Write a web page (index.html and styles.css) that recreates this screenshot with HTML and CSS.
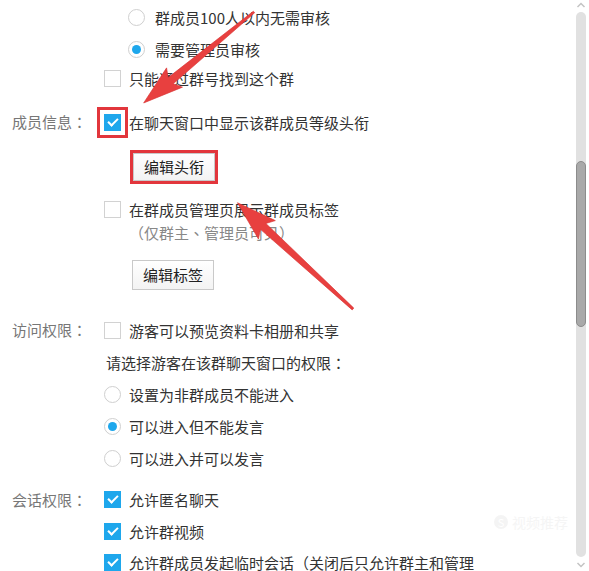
FILE: index.html
```html
<!DOCTYPE html>
<html>

<head lang="zh">
    <meta charset="UTF-8">
    <title>群设置</title>
    <link rel="stylesheet" href="styles.css">
</head>

<body>
    <div class="window">
        <div class="panel">
            <div class="group group-top">
                <div class="options">
                    <div class="row sub"><span class="radio"></span>群成员100人以内无需审核</div>
                    <div class="row sub"><span class="radio on"></span>需要管理员审核</div>
                    <div class="row short"><span class="check"></span>只能通过群号找到这个群</div>
                </div>
            </div>

            <div class="group group-member">
                <div class="label">成员信息<span class="colon">：</span></div>
                <div class="options">
                    <div class="row"><span class="check on marked"></span>在聊天窗口中显示该群成员等级头衔</div>
                    <div class="btn-row"><a href="javascript:void(0);" class="btn marked">编辑头衔</a></div>
                    <div class="row row-tag"><span class="check"></span>在群成员管理页展示群成员标签</div>
                    <div class="note"><span class="colon">（</span>仅群主<span class="colon">、</span>管理员可见<span class="colon">）</span></div>
                    <div class="btn-row btn-row-tag"><a href="javascript:void(0);" class="btn btn-tag">编辑标签</a></div>
                </div>
            </div>

            <div class="group group-visit">
                <div class="label">访问权限<span class="colon">：</span></div>
                <div class="options">
                    <div class="row"><span class="check"></span>游客可以预览资料卡相册和共享</div>
                    <div class="row tip">请选择游客在该群聊天窗口的权限<span class="colon">：</span></div>
                    <div class="row"><span class="radio"></span>设置为非群成员不能进入</div>
                    <div class="row"><span class="radio on"></span>可以进入但不能发言</div>
                    <div class="row"><span class="radio"></span>可以进入并可以发言</div>
                </div>
            </div>

            <div class="group group-talk">
                <div class="label">会话权限<span class="colon">：</span></div>
                <div class="options">
                    <div class="row row-a"><span class="check on"></span>允许匿名聊天</div>
                    <div class="row"><span class="check on"></span>允许群视频</div>
                    <div class="row row-a"><span class="check on"></span>允许群成员发起临时会话<span class="colon">（</span>关闭后只允许群主和管理</div>
                </div>
            </div>
        </div>

        <div class="scrollbar">
            <svg class="scroll-arrow" width="10" height="12" viewBox="0 0 10 12">
                <polyline points="1.5,7 5,3.5 8.5,7" fill="none" stroke="#c4c4c4" stroke-width="1.5" />
            </svg>
            <div class="track">
                <div class="thumb"></div>
            </div>
            <svg class="scroll-arrow" width="10" height="12" viewBox="0 0 10 12">
                <polyline points="1.5,4 5,7.5 8.5,4" fill="none" stroke="#c4c4c4" stroke-width="1.5" />
            </svg>
        </div>

        <div class="watermark"><span class="wm-logo">S</span>视频推荐</div>

        <!-- 标注箭头 -->
        <svg class="arrows" width="589" height="571" viewBox="0 0 589 571">
            <g transform="translate(254 12) rotate(140.5)">
                <polygon points="0,-1 108,-4 103,-12.5 143,0 103,12.5 108,4 0,1" />
            </g>
            <g transform="translate(353 309) rotate(-137.4)">
                <polygon points="0,-1.2 122,-4 117,-12.5 157,0 117,12.5 122,4 0,1.2" />
            </g>
        </svg>
    </div>
</body>

</html>
```

FILE: styles.css
```css
html,
body,
div,
span,
a {
    padding: 0px;
    margin: 0px;
}

body {
    background: #ffffff;
    font-family: "Noto Sans CJK SC", "Noto Sans", sans-serif;
    font-size: 15px;
    color: #333333;
}

a {
    text-decoration: none;
    color: #333333;
}

.window {
    position: relative;
    width: 589px;
    height: 571px;
    overflow: hidden;
    display: flex;
}

.panel {
    flex: 1;
    padding-top: 1px;
}

.group {
    display: flex;
}

.group-top {
    padding-left: 104px;
}

.group-member {
    margin-top: 15px;
}

.group-visit {
    margin-top: 24px;
}

.group-talk {
    margin-top: 10px;
}

.label {
    width: 92px;
    flex-shrink: 0;
    padding-left: 12px;
    height: 32px;
    line-height: 32px;
    color: #777777;
    white-space: nowrap;
}

/* 全角标点居中 */
.colon {
    font-family: "Noto Sans CJK TC", "Noto Sans CJK SC", sans-serif;
}

.group-talk .label {
    height: 31px;
    line-height: 31px;
}

.options {
    flex: 1;
}

.row {
    display: flex;
    align-items: center;
    height: 32px;
    white-space: nowrap;
}

.row.short {
    height: 26px;
}

.row.row-a {
    height: 31px;
}

.row.sub {
    padding-left: 24px;
}

.row.sub .radio {
    margin-right: 10px;
}

.row.tip {
    padding-left: 2px;
}

.row-tag {
    margin-top: 12px;
}

.check {
    width: 15px;
    height: 15px;
    border: 1px solid #d2d2d2;
    background: #ffffff;
    margin-right: 8px;
    flex-shrink: 0;
    position: relative;
}

.check.on {
    background: #1ea7ec;
    border-color: #1ea7ec;
}

.check.on::after {
    content: "";
    position: absolute;
    left: 3px;
    top: 2px;
    width: 8px;
    height: 4px;
    border-left: 2px solid #ffffff;
    border-bottom: 2px solid #ffffff;
    transform: rotate(-45deg);
    transform-origin: center;
    margin-top: 1px;
}

.radio {
    width: 15px;
    height: 15px;
    border: 1px solid #cfcfcf;
    border-radius: 50%;
    background: #ffffff;
    margin-right: 8px;
    flex-shrink: 0;
    display: flex;
    align-items: center;
    justify-content: center;
}

.radio.on::after {
    content: "";
    width: 9px;
    height: 9px;
    border-radius: 50%;
    background: #1ea7ec;
}

.marked {
    outline: 3px solid #e2363c;
}

.check.marked {
    outline-offset: 4px;
}

.btn-row {
    margin-top: 15px;
    padding-left: 29px;
}

.btn {
    display: block;
    width: 80px;
    height: 26px;
    line-height: 26px;
    text-align: center;
    border: 1px solid #c9c9c9;
    background: linear-gradient(#ffffff, #f3f3f3);
    color: #222222;
}

.btn-row-tag {
    margin-top: 19px;
    padding-left: 28px;
}

.btn.btn-tag {
    height: 28px;
    line-height: 28px;
}

.note {
    height: 16px;
    line-height: 16px;
    color: #888888;
    padding-left: 25px;
    white-space: nowrap;
}

.scrollbar {
    width: 13px;
    display: flex;
    flex-direction: column;
}

.scroll-arrow {
    display: block;
    flex-shrink: 0;
}

.track {
    flex: 1;
    width: 10px;
    margin: 0px 0px 2px 0px;
    background: #e1e1e1;
    border-radius: 5px;
}

.thumb {
    margin-top: 149px;
    height: 166px;
    background: #a9a9a9;
    border: 1px solid #8c8c8c;
    border-radius: 5px;
    box-sizing: border-box;
    width: 10px;
}

.watermark {
    position: absolute;
    left: 494px;
    top: 512px;
    font-size: 14px;
    color: #f5f5f5;
    display: flex;
    align-items: center;
}

.wm-logo {
    width: 14px;
    height: 14px;
    border-radius: 50%;
    background: #f4f4f4;
    color: #ffffff;
    font-size: 11px;
    line-height: 14px;
    text-align: center;
    margin-right: 4px;
}

.arrows {
    position: absolute;
    left: 0px;
    top: 0px;
    pointer-events: none;
}

.arrows polygon {
    fill: #e8403f;
    stroke: #d83434;
    stroke-width: 0.6;
}
```
